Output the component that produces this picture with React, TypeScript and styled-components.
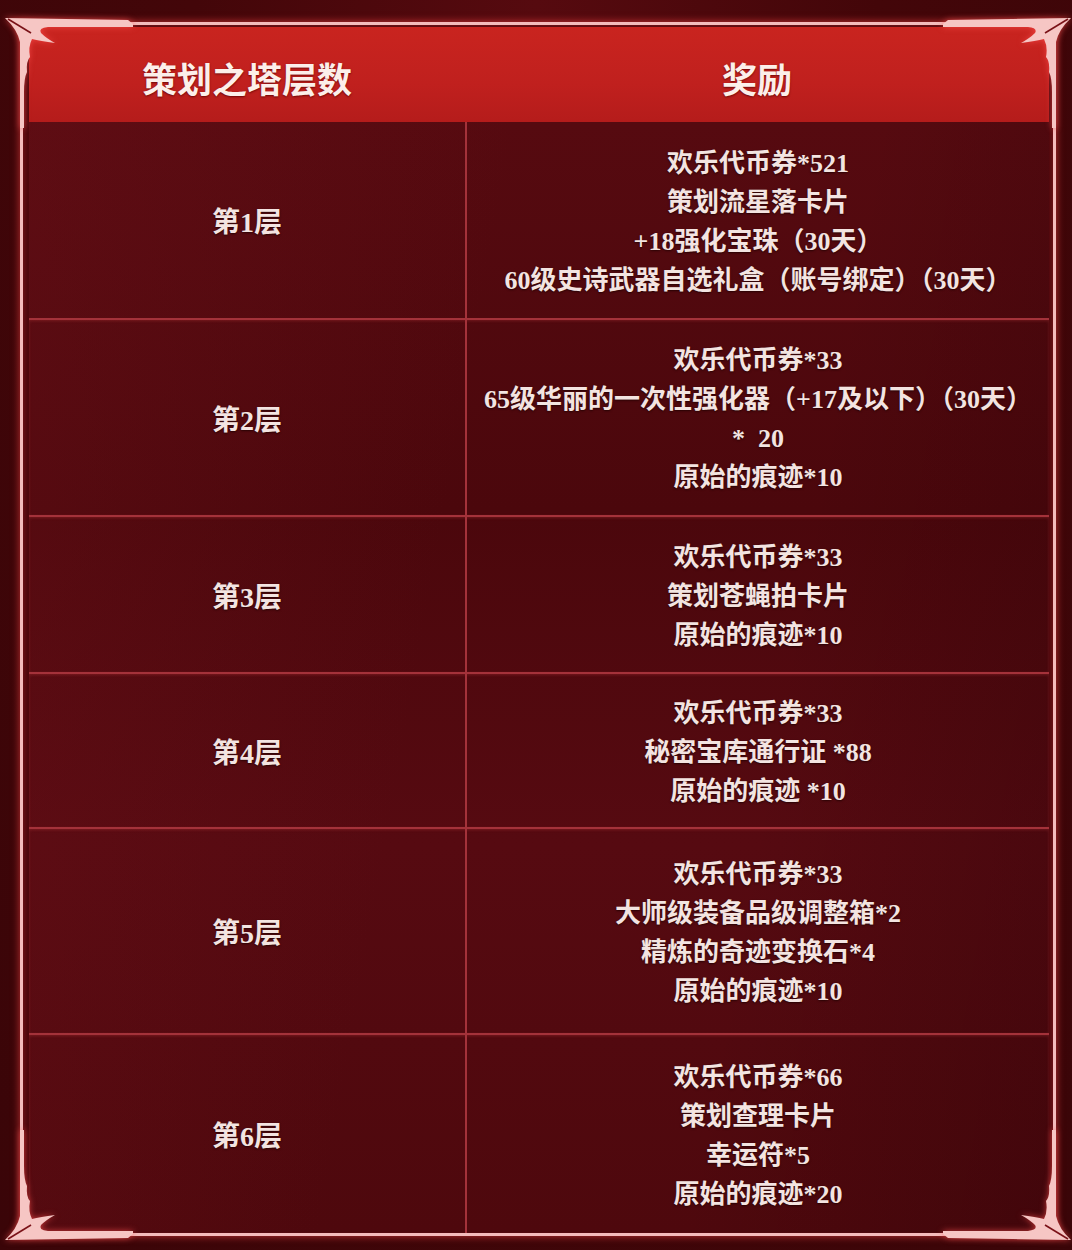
import React from "react";
import styled, { createGlobalStyle } from "styled-components";

const GlobalStyle = createGlobalStyle`
  html, body {
    margin: 0;
    padding: 0;
    background: #3b0509;
    overflow: hidden;
  }
`;

const FONT = `"Liberation Serif", "Noto Sans CJK SC", serif`;

type Floor = {
  name: string;
  height: number;
  rewards: string[];
};

const floors: Floor[] = [
  {
    name: "第1层",
    height: 196,
    rewards: [
      "欢乐代币券*521",
      "策划流星落卡片",
      "+18强化宝珠（30天）",
      "60级史诗武器自选礼盒（账号绑定）（30天）",
    ],
  },
  {
    name: "第2层",
    height: 197,
    rewards: [
      "欢乐代币券*33",
      "65级华丽的一次性强化器（+17及以下）（30天）",
      "*  20",
      "原始的痕迹*10",
    ],
  },
  {
    name: "第3层",
    height: 157,
    rewards: ["欢乐代币券*33", "策划苍蝇拍卡片", "原始的痕迹*10"],
  },
  {
    name: "第4层",
    height: 155,
    rewards: ["欢乐代币券*33", "秘密宝库通行证 *88", "原始的痕迹 *10"],
  },
  {
    name: "第5层",
    height: 206,
    rewards: [
      "欢乐代币券*33",
      "大师级装备品级调整箱*2",
      "精炼的奇迹变换石*4",
      "原始的痕迹*10",
    ],
  },
  {
    name: "第6层",
    height: 200,
    rewards: ["欢乐代币券*66", "策划查理卡片", "幸运符*5", "原始的痕迹*20"],
  },
];

//Whole page with the dark red backdrop
const Page = styled.div`
  width: 1072px;
  height: 1250px;
  box-sizing: border-box;
  padding: 22px 16px 0 20px;
  overflow: hidden;
  background: radial-gradient(
      ellipse at 50% 0%,
      #560a0f 0%,
      #430609 45%,
      #3a0508 100%
    );
`;

//Pink glowing frame round the table
const Frame = styled.div`
  position: relative;
  height: 1214px;
  box-sizing: border-box;
  border: 3px solid #f4bcbc;
  box-shadow: 0 0 7px 1px rgba(255, 70, 70, 0.55),
    inset 0 0 6px rgba(255, 70, 70, 0.35);
  padding: 2px 4px 0 6px;
  display: flex;
  flex-direction: column;
  background: #4c070c;
`;

//Corner flourish
const Corner = styled.svg<{ $flipX?: boolean; $flipY?: boolean; $side: string }>`
  position: absolute;
  width: 140px;
  height: 130px;
  ${({ $side }) => $side}
  transform: scale(${({ $flipX }) => ($flipX ? -1 : 1)}, ${({ $flipY }) => ($flipY ? -1 : 1)});
  filter: drop-shadow(0 0 3px rgba(255, 80, 80, 0.7));
  pointer-events: none;
  z-index: 2;
`;

const Header = styled.div`
  display: grid;
  grid-template-columns: 436px 1fr;
  height: 95px;
  background: linear-gradient(180deg, #c9241f 0%, #c0201e 60%, #b51c1b 100%);
  border-top-left-radius: 6px;
  border-top-right-radius: 6px;
`;

const HeaderCell = styled.div`
  display: flex;
  align-items: center;
  justify-content: center;
  padding-top: 6px;
  font-family: ${FONT};
  font-weight: 700;
  font-size: 35px;
  color: #fcefea;
  text-shadow: 0 1px 2px rgba(90, 0, 0, 0.8);
`;

const Body = styled.div`
  flex: 1;
  background: linear-gradient(
      100deg,
      rgba(110, 18, 26, 0.35) 0%,
      rgba(0, 0, 0, 0) 40%,
      rgba(0, 0, 0, 0) 70%,
      rgba(30, 0, 4, 0.25) 100%
    ),
    linear-gradient(180deg, #560a10 0%, #4b070c 35%, #560a11 65%, #4e080d 100%);
`;

const Row = styled.div<{ $height: number; $first?: boolean }>`
  display: grid;
  grid-template-columns: 436px 1fr;
  height: ${({ $height }) => $height}px;
  box-sizing: border-box;
  border-top: ${({ $first }) => ($first ? "none" : "2px solid #a4323a")};
  box-shadow: ${({ $first }) =>
    $first ? "none" : "inset 0 1px 3px rgba(255, 90, 90, 0.2)"};
`;

const FloorCell = styled.div`
  display: flex;
  align-items: center;
  justify-content: center;
  font-family: ${FONT};
  font-weight: 700;
  font-size: 28px;
  color: #f3e4e1;
  text-shadow: 0 1px 2px rgba(30, 0, 0, 0.8);
`;

const RewardCell = styled.div`
  display: flex;
  flex-direction: column;
  align-items: center;
  justify-content: center;
  padding-top: 3px;
  border-left: 2px solid #a4323a;
`;

const RewardLine = styled.div`
  font-family: ${FONT};
  font-weight: 700;
  font-size: 26px;
  line-height: 39px;
  white-space: pre;
  color: #f3e4e1;
  text-shadow: 0 1px 2px rgba(30, 0, 0, 0.8);
`;

const CornerArt = () => (
  <>
    <path
      d="M5 18 L128 20 L133 24 L133 27 L48 27 Q38 28 41 33 Q46 38 55 43 Q40 41 32 39 Q28 47 30 57 Q26 61 27 72 Q24 78 24 92 L24 128 L20 128 L20 42 Q17 29 5 18 Z"
      fill="#f6c6c4"
    />
    <path d="M8 19 L31 33" stroke="#7a1218" strokeWidth="1.6" fill="none" />
  </>
);

const App = () => {
  return (
    <>
      <GlobalStyle />
      <Page>
        <Frame>
          <Corner viewBox="0 0 140 130" $side="left: -23px; top: -25px;">
            <CornerArt />
          </Corner>
          <Corner viewBox="0 0 140 130" $flipX $side="right: -23px; top: -25px;">
            <CornerArt />
          </Corner>
          <Corner viewBox="0 0 140 130" $flipY $side="left: -23px; bottom: -25px;">
            <CornerArt />
          </Corner>
          <Corner
            viewBox="0 0 140 130"
            $flipX
            $flipY
            $side="right: -23px; bottom: -25px;"
          >
            <CornerArt />
          </Corner>

          <Header>
            <HeaderCell>策划之塔层数</HeaderCell>
            <HeaderCell>奖励</HeaderCell>
          </Header>
          <Body>
            {floors.map((floor, index) => (
              <Row key={floor.name} $height={floor.height} $first={index === 0}>
                <FloorCell>{floor.name}</FloorCell>
                <RewardCell>
                  {floor.rewards.map((reward) => (
                    <RewardLine key={reward}>{reward}</RewardLine>
                  ))}
                </RewardCell>
              </Row>
            ))}
          </Body>
        </Frame>
      </Page>
    </>
  );
};

export default App;
